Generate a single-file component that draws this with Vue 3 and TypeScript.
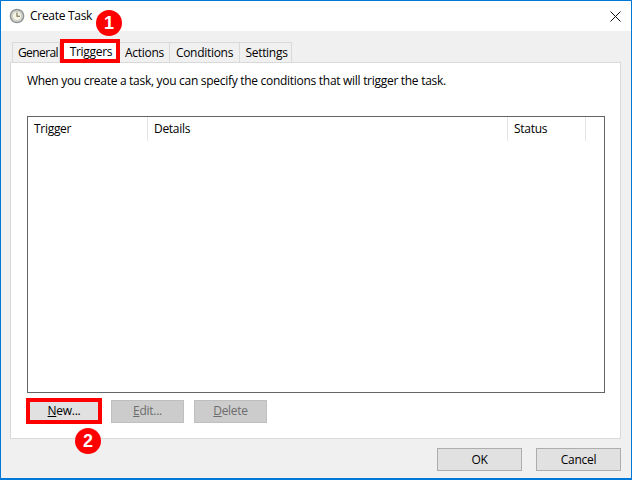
<script setup lang="ts">
const tabs = ['General', 'Triggers', 'Actions', 'Conditions', 'Settings']
const cols = [
  { name: 'Trigger', cls: 'c1' },
  { name: 'Details', cls: 'c2' },
  { name: 'Status', cls: 'c3' },
  { name: '', cls: 'c4' },
]
</script>

<template>
  <div class="win">
    <header class="title">
      <svg class="clock" width="16" height="16" viewBox="0 0 16 16">
        <circle cx="8" cy="8" r="6.6" fill="#dcdcd8" stroke="#8f9494" stroke-width="1.5" />
        <circle cx="8" cy="8" r="4.6" fill="#f5f3e4" stroke="#b9b9ae" stroke-width=".6" />
        <path d="M8 4.4V8.3H11" fill="none" stroke="#6d6a4e" stroke-width="1.1" />
      </svg>
      <span class="title-text">Create Task</span>
      <svg class="close" width="11" height="11" viewBox="0 0 11 11">
        <path d="M.5.5l10 10M10.5.5l-10 10" stroke="#111" stroke-width="1" fill="none" />
      </svg>
    </header>
    <main class="body">
      <nav class="tabs">
        <div v-for="t in tabs" :key="t" class="tab" :class="['t-' + t.toLowerCase(), { on: t === 'Triggers' }]">{{ t }}</div>
        <span class="badge b1">1</span>
      </nav>
      <section class="panel">
        <p class="desc">When you create a task, you can specify the conditions that will trigger the task.</p>
        <div class="list">
          <div class="head">
            <div v-for="c in cols" :key="c.cls" class="col" :class="c.cls">{{ c.name }}</div>
          </div>
        </div>
        <div class="actions">
          <button class="btn new"><u>N</u>ew...</button>
          <button class="btn off"><u>E</u>dit...</button>
          <button class="btn off"><u>D</u>elete</button>
          <span class="badge b2">2</span>
        </div>
      </section>
      <footer class="foot">
        <button class="btn big">OK</button>
        <button class="btn big">Cancel</button>
      </footer>
    </main>
  </div>
</template>

<style>
html, body { margin: 0; background: #fff; }
</style>

<style scoped>
.win {
  width: 632px; height: 480px; box-sizing: border-box;
  border: 1px solid #0078d7; border-width: 1px 1px 2px 1px;
  display: flex; flex-direction: column;
  font: 12px/16px "Open Sans", "Noto Sans", sans-serif; color: #000;
  letter-spacing: -.29px;
}
.title { height: 30px; flex: none; background: #fff; display: flex; align-items: center; padding: 0 10px 0 8px; }
.clock { margin-right: 5px; }
.title-text { flex: 1; }
.body { flex: 1; background: #f0f0f0; padding: 9px 10px 7px 9px; display: flex; flex-direction: column; position: relative; }
.tabs { display: flex; height: 22px; padding-left: 2px; position: relative; }
.tab {
  box-sizing: border-box; height: 20px; margin-top: 2px; padding: 2px 0 0; text-align: center;
  border: 1px solid #d9d9d9; border-bottom: none; border-left: none; background: #f0f0f0;
}
.t-general { width: 48px; border-left: 1px solid #d9d9d9; padding-left: 5px; text-align: left; letter-spacing: -.6px; }
.t-actions { width: 50px; }
.t-conditions { width: 70px; }
.t-settings { width: 52px; padding-left: 2px; }
.tab.on {
  width: 60px; height: 24px; margin-top: -1px; padding: 2px 0 0 2px; background: #fff;
  border: 4px solid #f00; position: relative; z-index: 1; line-height: 14px;
}
.panel { flex: 1; box-sizing: border-box; background: #fff; border: 1px solid #d9d9d9; padding: 10px 15px 14px 16px; display: flex; flex-direction: column; }
.desc { margin: 0 0 23px; height: 20px; }
.list { flex: 1; border: 1px solid #646464; background: #fff; }
.head { display: flex; height: 24px; }
.col { box-sizing: border-box; height: 24px; border-right: 1px solid #e5e5e5; padding: 4px 0 0 6px; }
.c1 { width: 120px; }
.c2 { width: 360px; }
.c3 { width: 78px; }
.c4 { width: 0; flex: 1; border: none; }
.actions { display: flex; align-items: center; gap: 10px; margin-top: 5px; height: 26px; position: relative; }
.btn {
  box-sizing: border-box; font: inherit; letter-spacing: inherit; color: #000; padding: 0;
  background: #e1e1e1; border: 1px solid #adadad; height: 23px; width: 73px;
}
.btn.new { width: 76px; height: 26px; margin: 0 -1px; border: 4px solid #f00; background: #e1e1e1; }
.btn.off { background: #ccc; border-color: #bfbfbf; color: #6d6d6d; }
.foot { display: flex; justify-content: flex-end; gap: 14px; margin-top: 9px; padding-right: 0; }
.btn.big { width: 85px; }
.badge {
  position: absolute; width: 26px; height: 26px; border-radius: 50%; background: #f00; color: #fff;
  font: bold 18px/26px "Liberation Sans", sans-serif; text-align: center; letter-spacing: 0; z-index: 2;
}
.b1 { left: 86px; top: -30px; }
.b2 { left: 48px; top: 30px; }
</style>
